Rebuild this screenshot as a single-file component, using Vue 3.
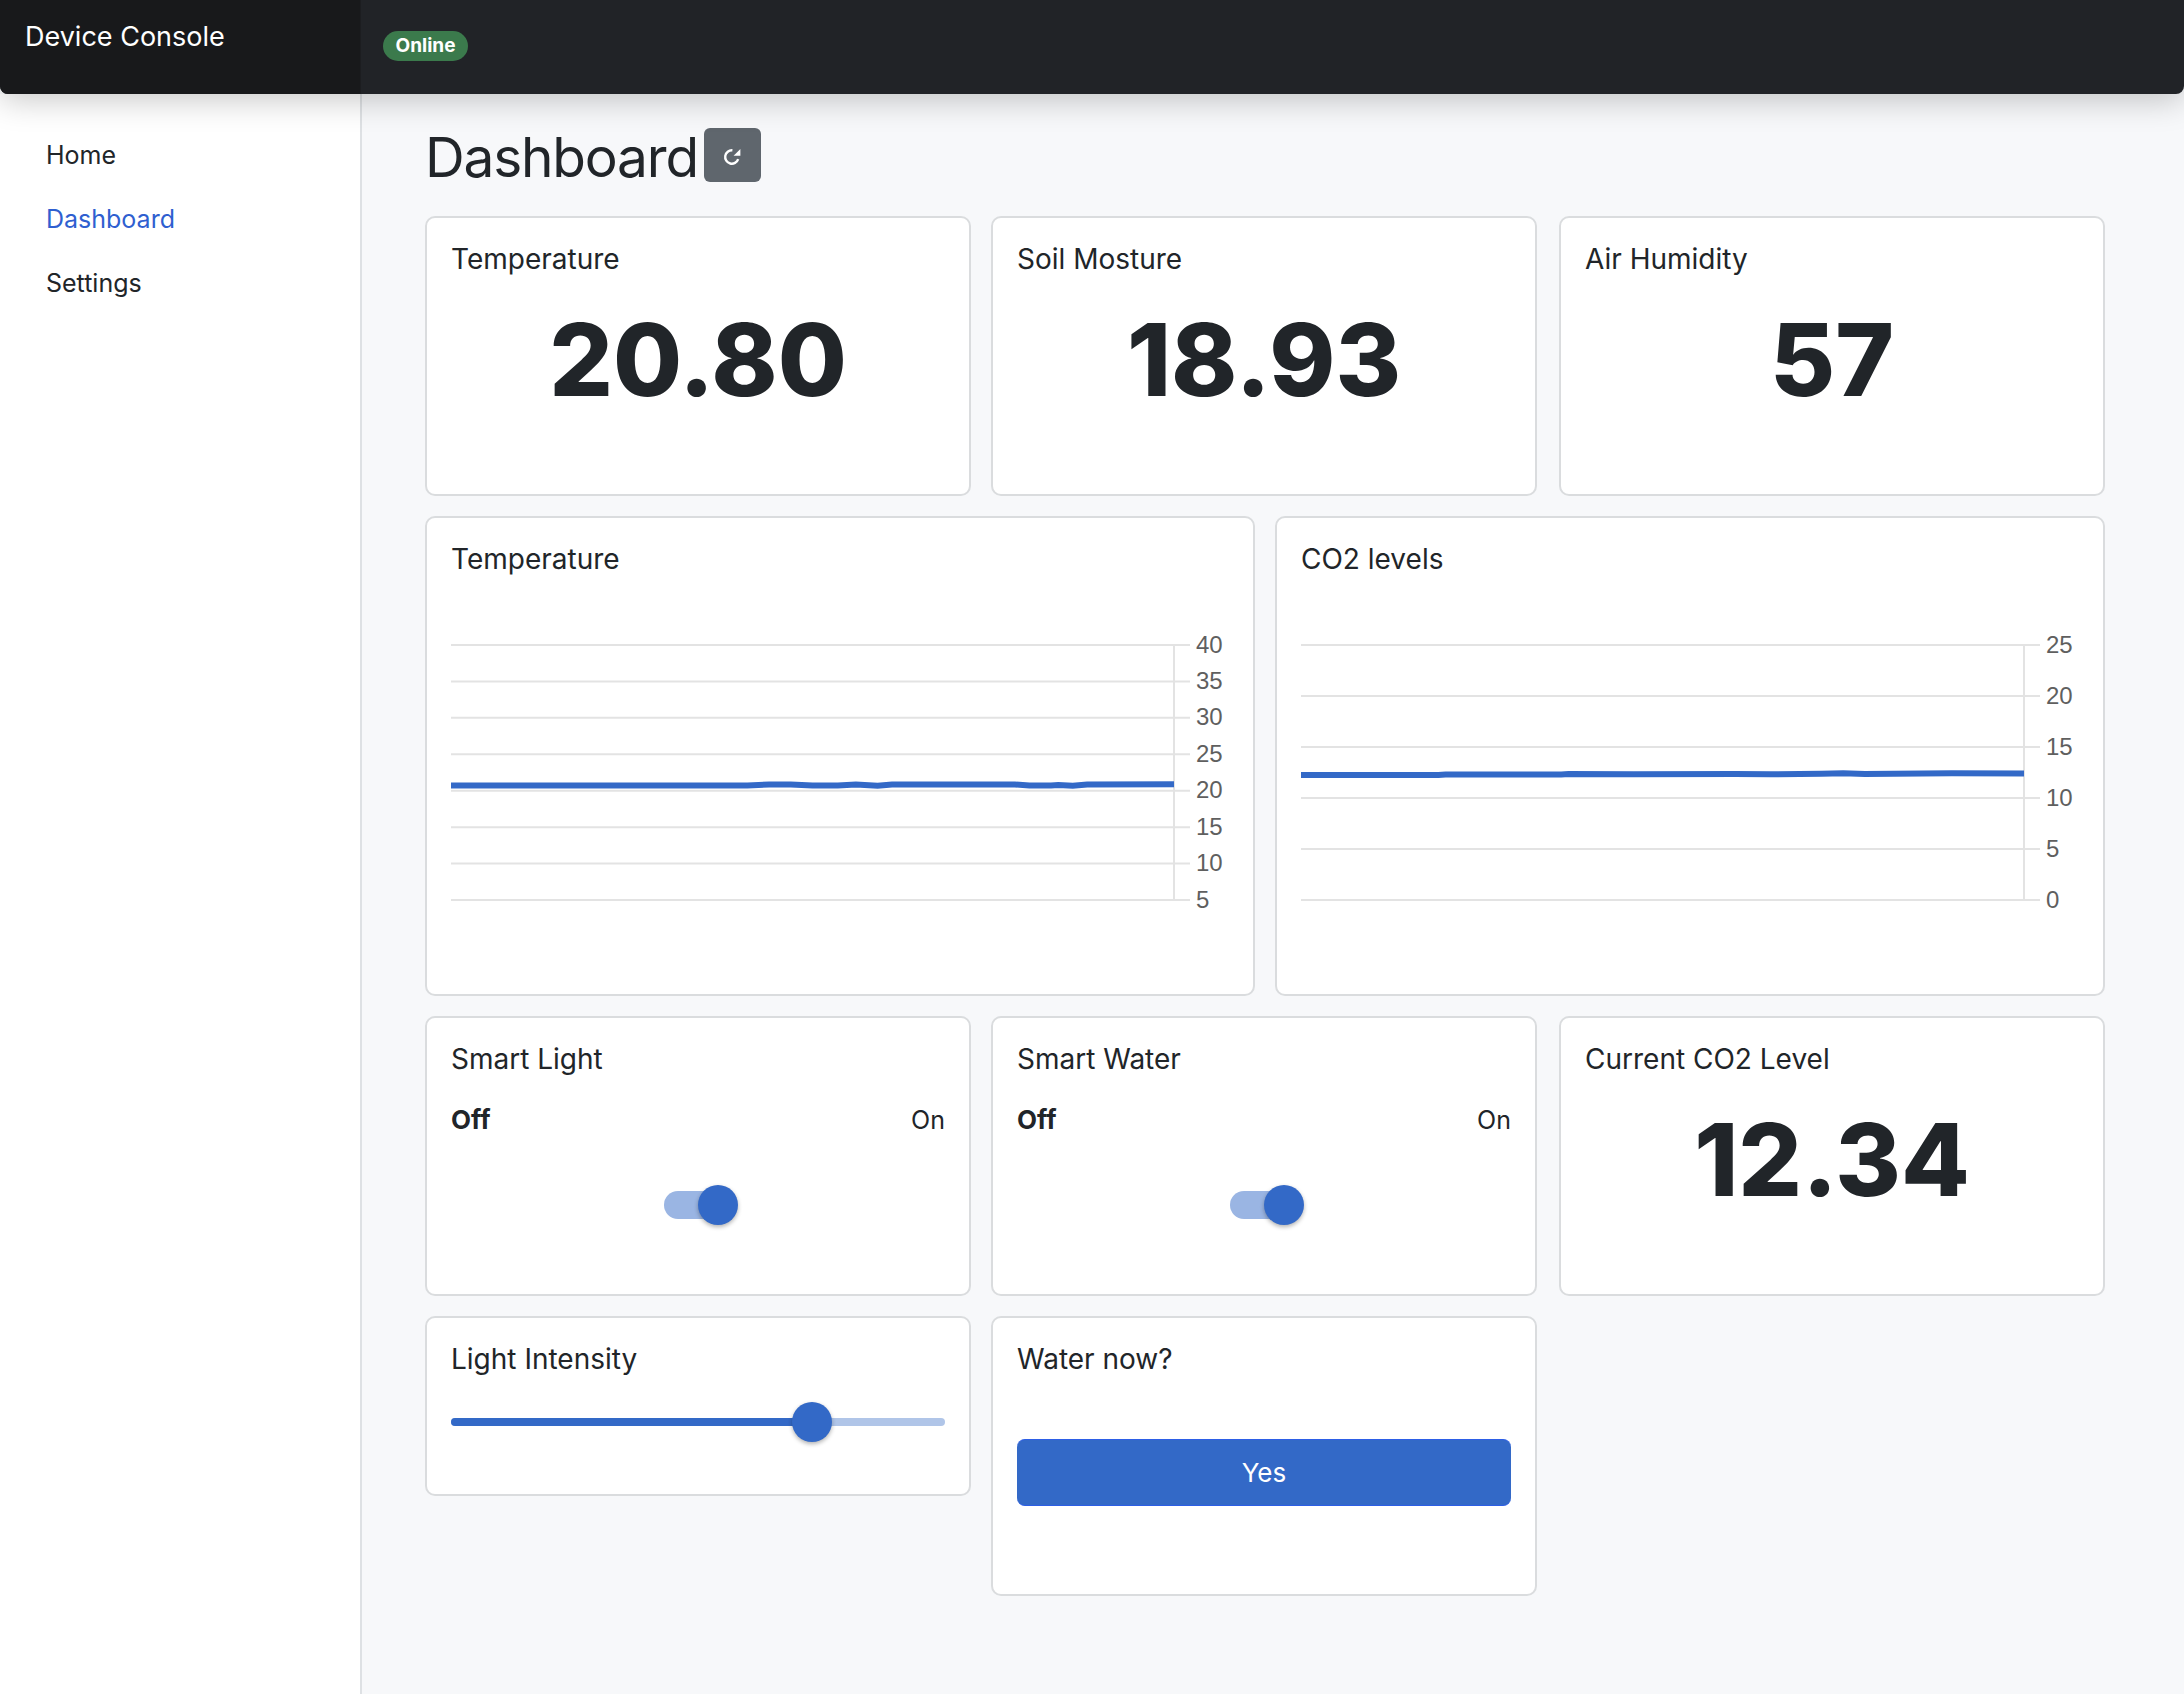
<script setup>
const statsTop = [
  { title: 'Temperature', value: '20.80', col: 'col-a' },
  { title: 'Soil Mosture', value: '18.93', col: 'col-b' },
  { title: 'Air Humidity', value: '57', col: 'col-c' }
]
const navItems = [
  { label: 'Home', active: false },
  { label: 'Dashboard', active: true },
  { label: 'Settings', active: false }
]
const toggles = [
  { title: 'Smart Light', col: 'col-a' },
  { title: 'Smart Water', col: 'col-b' }
]
const intensity = 73

const plotWidth = 723
const plotHeight = 255

function buildChart(title, col, ticks, points) {
  const top = ticks[0]
  const bottom = ticks[ticks.length - 1]
  const toY = (v) => ((top - v) / (top - bottom)) * plotHeight
  return {
    title,
    col,
    grid: ticks.map((t) => ({ label: t, y: toY(t) })),
    line: points.map(([x, v]) => `${(x * plotWidth).toFixed(1)},${toY(v).toFixed(2)}`).join(' ')
  }
}

const charts = [
  buildChart('Temperature', 'half-a', [40, 35, 30, 25, 20, 15, 10, 5], [
    [0, 20.72], [0.41, 20.72], [0.44, 20.85], [0.47, 20.85], [0.5, 20.72], [0.535, 20.72],
    [0.56, 20.85], [0.59, 20.68], [0.61, 20.85], [0.78, 20.85], [0.8, 20.7], [0.83, 20.7],
    [0.84, 20.8], [0.86, 20.68], [0.88, 20.85], [1, 20.9]
  ]),
  buildChart('CO2 levels', 'half-b', [25, 20, 15, 10, 5, 0], [
    [0, 12.25], [0.19, 12.25], [0.2, 12.3], [0.36, 12.3], [0.37, 12.35], [0.46, 12.33],
    [0.6, 12.35], [0.65, 12.33], [0.72, 12.38], [0.75, 12.42], [0.78, 12.36], [0.9, 12.42], [1, 12.4]
  ])
]
</script>

<template>
  <div class="app">
    <header class="topbar">
      <div class="brand">Device Console</div>
      <div class="status"><span class="badge">Online</span></div>
    </header>
    <div class="layout">
      <aside class="sidebar">
        <nav class="nav">
          <a v-for="item in navItems" :key="item.label" class="nav-link" :class="{ active: item.active }">{{ item.label }}</a>
        </nav>
      </aside>
      <main class="main">
        <div class="heading">
          <h1 class="page-title">Dashboard</h1>
          <button class="refresh" type="button" aria-label="Refresh">
            <svg class="refresh-icon" viewBox="0 0 18 18">
              <path d="M15.2 11.2A6.7 6.7 0 1 1 9.4 2.3" fill="none" stroke="currentColor" stroke-width="2.4" />
              <path d="M17.4 1v6.8h-6.8z" fill="currentColor" />
            </svg>
          </button>
        </div>
        <div class="cards">
          <section v-for="s in statsTop" :key="s.title" class="card tall" :class="s.col">
            <h2 class="card-title">{{ s.title }}</h2>
            <div class="big">{{ s.value }}</div>
          </section>

          <section v-for="c in charts" :key="c.title" class="card chart-card" :class="c.col">
            <h2 class="card-title">{{ c.title }}</h2>
            <svg class="chart" viewBox="0 -15 778 285">
              <g v-for="g in c.grid" :key="g.label">
                <line class="grid-line" x1="0" :x2="739" :y1="g.y" :y2="g.y" />
                <text class="tick" x="745" :y="g.y - 1">{{ g.label }}</text>
              </g>
              <line class="grid-line" x1="723" x2="723" y1="0" :y2="plotHeight" />
              <polyline class="series" :points="c.line" />
            </svg>
          </section>

          <section v-for="t in toggles" :key="t.title" class="card tall" :class="t.col">
            <h2 class="card-title">{{ t.title }}</h2>
            <div class="off-on"><strong>Off</strong><span>On</span></div>
            <div class="switch-row">
              <div class="switch"><span class="switch-thumb"></span></div>
            </div>
          </section>
          <section class="card tall col-c">
            <h2 class="card-title">Current CO2 Level</h2>
            <div class="big">12.34</div>
          </section>

          <section class="card short col-a">
            <h2 class="card-title">Light Intensity</h2>
            <div class="slider">
              <div class="slider-track">
                <div class="slider-fill" :style="{ width: intensity + '%' }"></div>
                <span class="slider-thumb" :style="{ left: intensity + '%' }"></span>
              </div>
            </div>
          </section>
          <section class="card tall col-b">
            <h2 class="card-title">Water now?</h2>
            <button class="yes" type="button">Yes</button>
          </section>
        </div>
      </main>
    </div>
  </div>
</template>

<style>
body { background: #f7f8fa; }
</style>

<style scoped>
.app {
  font-family: Inter, "Liberation Sans", sans-serif;
  color: #212529;
  min-height: 100vh;
  display: flex;
  flex-direction: column;
}
.topbar {
  position: relative;
  z-index: 2;
  display: flex;
  height: 94px;
  background: #212327;
  border-radius: 0 0 8px 8px;
  box-shadow: 0 6px 32px rgba(0, 0, 0, 0.22);
}
.brand {
  width: 361px;
  box-sizing: border-box;
  padding: 20px 0 0 25px;
  background: #18191b;
  border-right: 1px solid #1c1d20;
  border-radius: 0 0 0 8px;
  color: #fff;
  font-size: 27px;
  line-height: 34px;
}
.status { padding: 31px 0 0 22px; }
.badge {
  display: block;
  width: 85px;
  height: 30px;
  line-height: 30px;
  text-align: center;
  background: #3b7a4c;
  color: #fff;
  font-size: 19px;
  font-weight: 700;
  border-radius: 15px;
}
.layout {
  flex: 1;
  display: flex;
}
.sidebar {
  width: 362px;
  flex: none;
  background: #fff;
  border-right: 2px solid #dee1e4;
  box-sizing: border-box;
}
.nav {
  display: flex;
  flex-direction: column;
  gap: 30px;
  padding: 44px 0 0 46px;
}
.nav-link {
  font-size: 25px;
  line-height: 34px;
  color: #212529;
}
.nav-link.active { color: #2f5fd0; }
.main {
  flex: 1;
  min-width: 0;
  padding: 34px 79px 0 63px;
}
.heading {
  display: flex;
  align-items: flex-start;
  gap: 6px;
  height: 88px;
}
.page-title {
  margin: -5px 0 0;
  font-size: 55px;
  font-weight: 400;
  line-height: 68px;
  letter-spacing: -1.2px;
}
.refresh {
  width: 57px;
  height: 54px;
  padding: 0;
  border: 0;
  border-radius: 6px;
  background: #5f666d;
  color: #fff;
  display: flex;
  align-items: center;
  justify-content: center;
}
.refresh-icon { width: 18px; height: 18px; margin-top: 3px; }
.cards {
  display: grid;
  grid-template-columns: 546px 20px 264px 20px 262px 22px 546px;
  row-gap: 20px;
  align-items: start;
}
.col-a { grid-column: 1; }
.col-b { grid-column: 3 / 6; }
.col-c { grid-column: 7; }
.half-a { grid-column: 1 / 4; }
.half-b { grid-column: 5 / 8; }
.card {
  box-sizing: border-box;
  background: #fff;
  border: 2px solid #dadcde;
  border-radius: 10px;
  padding: 24px;
}
.tall { height: 280px; }
.short { height: 180px; }
.chart-card { height: 480px; }
.card-title {
  margin: 0;
  font-size: 28px;
  font-weight: 400;
  line-height: 34px;
}
.big {
  margin-top: 24px;
  text-align: center;
  font-size: 100px;
  font-weight: 800;
  line-height: 120px;
}
.chart {
  display: block;
  width: 778px;
  height: 285px;
  margin-top: 54px;
  overflow: visible;
}
.grid-line { stroke: #e3e3e3; stroke-width: 2; }
.tick {
  font-family: "Liberation Sans", Arial, sans-serif;
  font-size: 24px;
  fill: #5f5f5f;
  dominant-baseline: central;
}
.series {
  fill: none;
  stroke: #3369c7;
  stroke-width: 6;
}
.off-on {
  display: flex;
  justify-content: space-between;
  margin-top: 27px;
  font-size: 25px;
  line-height: 34px;
}
.off-on strong { font-size: 26px; }
.switch-row {
  display: flex;
  justify-content: center;
  margin-top: 54px;
}
.switch {
  position: relative;
  width: 68px;
  height: 28px;
  border-radius: 14px;
  background: #9ab5e3;
}
.switch-thumb {
  position: absolute;
  left: 34px;
  top: -6px;
  width: 40px;
  height: 40px;
  border-radius: 50%;
  background: #3369c7;
  box-shadow: 0 2px 4px rgba(0, 0, 0, 0.3);
}
.slider {
  margin-top: 26px;
  height: 40px;
  display: flex;
  align-items: center;
}
.slider-track {
  position: relative;
  width: 100%;
  height: 8px;
  border-radius: 4px;
  background: #b0c5e8;
}
.slider-fill {
  height: 100%;
  border-radius: 4px;
  background: #3369c7;
}
.slider-thumb {
  position: absolute;
  top: -16px;
  width: 40px;
  height: 40px;
  margin-left: -20px;
  border-radius: 50%;
  background: #3369c7;
  box-shadow: 0 2px 4px rgba(0, 0, 0, 0.3);
}
.yes {
  display: block;
  width: 100%;
  height: 67px;
  margin-top: 63px;
  border: 0;
  border-top: 1px solid #2d5ee6;
  border-bottom: 1px solid #2d5ee6;
  border-radius: 8px;
  background: #3369c7;
  color: #fff;
  font-family: inherit;
  font-size: 26px;
}
</style>
